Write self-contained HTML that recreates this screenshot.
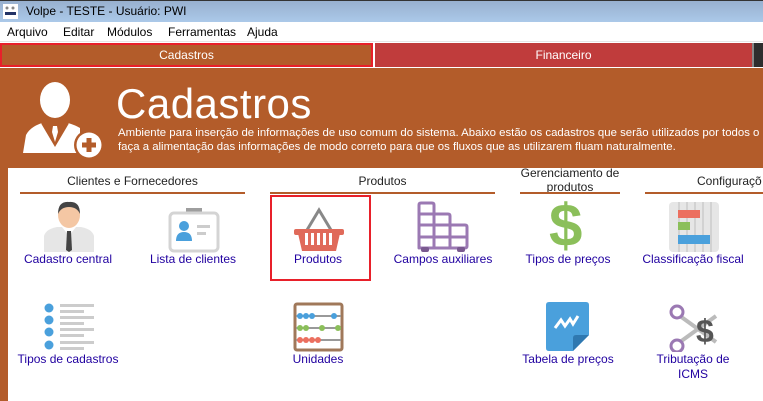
<!DOCTYPE html>
<html><head><meta charset="utf-8"><style>
*{margin:0;padding:0;box-sizing:border-box}
body{width:763px;height:401px;overflow:hidden;font-family:"Liberation Sans",sans-serif;background:#b35c2a;position:relative}
.abs{position:absolute}
.title{left:0;top:0;width:763px;height:22px;background:linear-gradient(#98b0cf,#abc9e9);border-top:1px solid #333;font-size:12px;color:#000}
.menu{left:0;top:22px;width:763px;height:20px;background:#fff;border-bottom:1px solid #e6e6e6;font-size:12px}
.menu span{position:absolute;top:3px}
.tab{top:43px;height:24px;color:#fff;font-size:12px;text-align:center;line-height:24px}
.hdr{font-size:12px;color:#222;text-align:center}
.ul{height:2px;background:#b35c2a;top:192px}
.lbl{font-size:12px;color:#2000a0;text-align:center;width:124px}
</style></head><body>
<div class="abs title">
<svg class="abs" style="left:3px;top:3px" width="15" height="15"><rect width="15" height="15" fill="#fff"/><rect x="2" y="8" width="11" height="3" fill="#236"/><circle cx="4" cy="4" r="1.5" fill="#888"/><circle cx="10" cy="4" r="1.5" fill="#888"/></svg>
<span class="abs" style="left:26px;top:3px">Volpe - TESTE - Usuário: PWI</span></div>
<div class="abs menu"><span style="left:7px">Arquivo</span><span style="left:63px">Editar</span><span style="left:107px">Módulos</span><span style="left:168px">Ferramentas</span><span style="left:247px">Ajuda</span></div>
<div class="abs" style="left:0;top:42px;width:763px;height:26px;background:#fff"></div>
<div class="abs tab" style="left:0;width:373px;background:#b35c2a;border:2px solid #e8202a;line-height:20px">Cadastros</div>
<div class="abs tab" style="left:375px;width:377px;background:#c03c3c">Financeiro</div>
<div class="abs" style="left:752px;top:43px;width:2px;height:24px;background:#888"></div>
<div class="abs" style="left:754px;top:43px;width:9px;height:24px;background:#2e2e2e"></div>
<div class="abs" style="left:0;top:68px;width:763px;height:333px;background:#b35c2a"></div>
<svg class="abs" style="left:20px;top:80px" width="85" height="80"><ellipse cx="35" cy="20" rx="15" ry="18" fill="#fff"/><path d="M3 73 L6 55 Q10 47 22 43 L35 65 L48 43 Q55 45 60 48 L60 73 Z" fill="#fff"/><path d="M33 46 L37 46 L38 52 L35 62 L32 52 Z" fill="#fff"/><path d="M22 43 L35 65 L48 43" fill="none" stroke="#b35c2a" stroke-width="2"/><circle cx="69" cy="65" r="15" fill="#b35c2a"/><circle cx="69" cy="65" r="12.5" fill="#fff"/><rect x="62" y="62.5" width="14" height="5" fill="#b35c2a"/><rect x="66.5" y="58" width="5" height="14" fill="#b35c2a"/></svg>
<div class="abs" style="left:116px;top:80px;font-size:42px;color:#fff;font-weight:normal;letter-spacing:0.5px">Cadastros</div>
<div class="abs" style="left:118px;top:126px;font-size:11.4px;color:#fff;line-height:14px;white-space:nowrap">Ambiente para inserção de informações de uso comum do sistema. Abaixo estão os cadastros que serão utilizados por todos o<br>faça a alimentação das informações de modo correto para que os fluxos que as utilizarem fluam naturalmente.</div>
<div class="abs" style="left:8px;top:168px;width:755px;height:233px;background:#fff"></div>
<div class="abs hdr" style="left:20px;top:174px;width:225px">Clientes e Fornecedores</div>
<div class="abs ul" style="left:20px;width:225px"></div>
<div class="abs hdr" style="left:270px;top:174px;width:225px">Produtos</div>
<div class="abs ul" style="left:270px;width:225px"></div>
<div class="abs hdr" style="left:505px;top:166px;width:130px;line-height:14px">Gerenciamento de<br>produtos</div>
<div class="abs ul" style="left:520px;width:100px"></div>
<div class="abs hdr" style="left:697px;top:174px;width:80px;text-align:left">Configuraçõ</div>
<div class="abs ul" style="left:645px;width:118px"></div>
<div class="abs" style="left:270px;top:195px;width:101px;height:86px;border:2px solid #e8202a"></div>
<!-- row1 icons -->
<svg class="abs" style="left:43px;top:200px" width="52" height="52"><path d="M1 52 L1 36 Q3 29 14 27 L38 27 Q49 29 51 36 L51 52Z" fill="#e6e6e6"/><path d="M19 27 L26 36 L33 27Z" fill="#fff"/><path d="M24 31 L28 31 L29 50 L26 52 L23 50Z" fill="#444"/><ellipse cx="26" cy="15" rx="11" ry="13" fill="#f4c7a4"/><path d="M15 14 Q15 1 26 2 Q37 1 37 14 Q34 7 26 7 Q18 7 15 14Z" fill="#444"/></svg>
<svg class="abs" style="left:168px;top:208px" width="52" height="48"><rect x="18" y="0" width="16" height="6" fill="#9e9e9e"/><rect x="2" y="5" width="48" height="38" rx="4" fill="none" stroke="#d4d4d4" stroke-width="3"/><circle cx="16" cy="18" r="5" fill="#4aa0dc"/><path d="M8 33 Q8 24 16 24 Q24 24 24 33Z" fill="#4aa0dc"/><rect x="29" y="17" width="13" height="3" fill="#ccc"/><rect x="29" y="24" width="9" height="3" fill="#ccc"/></svg>
<svg class="abs" style="left:293px;top:206px" width="52" height="46"><path d="M14 24 L26 4 L38 24" fill="none" stroke="#888" stroke-width="3"/><rect x="1" y="23" width="50" height="6" rx="2" fill="#e06a5a"/><path d="M4 29 L48 29 L43 51 L9 51Z" fill="#e06a5a" transform="translate(0,-6)"/><g fill="#fff"><rect x="12" y="27" width="3" height="12"/><rect x="18" y="27" width="3" height="12"/><rect x="24" y="27" width="3" height="12"/><rect x="30" y="27" width="3" height="12"/><rect x="36" y="27" width="3" height="12"/></g></svg>
<svg class="abs" style="left:417px;top:201px" width="52" height="52"><g fill="none" stroke="#9b79b3" stroke-width="3" stroke-linejoin="round"><path d="M2 47 V4 Q2 2 4 2 H15 Q17 2 17 4 V13 H31 Q33 13 33 15 V24 H48 Q50 24 50 26 V45 Q50 47 48 47 H4 Q2 47 2 45Z"/><path d="M2 13 H17 M2 24 H33 M2 36 H50 M17 13 V47 M33 24 V47"/></g><rect x="4" y="46" width="8" height="5" rx="2" fill="#7a5a90"/><rect x="40" y="46" width="8" height="5" rx="2" fill="#7a5a90"/></svg>
<div class="abs" style="left:549px;top:196px;font-size:60px;font-weight:bold;color:#8bbf5a;line-height:60px">$</div>
<svg class="abs" style="left:669px;top:202px" width="50" height="50"><rect width="50" height="50" rx="4" fill="#e6e6e6"/><g stroke="#d2d2d2" stroke-width="2"><path d="M10 0V50M18 0V50M26 0V50M34 0V50M42 0V50"/></g><rect x="9" y="8" width="22" height="8" fill="#ec6f5f"/><rect x="9" y="20" width="12" height="8" fill="#8bbf5a"/><rect x="9" y="33" width="32" height="9" fill="#4aa0dc"/></svg>
<div class="abs lbl" style="left:6px;top:252px">Cadastro central</div>
<div class="abs lbl" style="left:131px;top:252px">Lista de clientes</div>
<div class="abs lbl" style="left:256px;top:252px">Produtos</div>
<div class="abs lbl" style="left:381px;top:252px">Campos auxiliares</div>
<div class="abs lbl" style="left:506px;top:252px">Tipos de preços</div>
<div class="abs lbl" style="left:631px;top:252px">Classificação fiscal</div>
<!-- row2 icons -->
<svg class="abs" style="left:43px;top:302px" width="52" height="50"><g fill="#4aa0dc"><circle cx="6" cy="6" r="4.5"/><circle cx="6" cy="18" r="4.5"/><circle cx="6" cy="30" r="4.5"/><circle cx="6" cy="43" r="4.5"/></g><g fill="#ccc"><rect x="17" y="2" width="34" height="3"/><rect x="17" y="8" width="24" height="3"/><rect x="17" y="14" width="34" height="3"/><rect x="17" y="20" width="24" height="3"/><rect x="17" y="26" width="34" height="3"/><rect x="17" y="32" width="24" height="3"/><rect x="17" y="39" width="34" height="3"/><rect x="17" y="45" width="24" height="3"/></g></svg>
<svg class="abs" style="left:293px;top:302px" width="52" height="50"><rect x="2" y="2" width="47" height="46" rx="2" fill="none" stroke="#a0785a" stroke-width="3"/><g stroke="#999" stroke-width="2"><path d="M3 14H48M3 26H48M3 38H48"/></g><g fill="#4aa0dc"><circle cx="7" cy="14" r="3"/><circle cx="13" cy="14" r="3"/><circle cx="19" cy="14" r="3"/><circle cx="41" cy="14" r="3"/></g><g fill="#8bbf5a"><circle cx="7" cy="26" r="3"/><circle cx="13" cy="26" r="3"/><circle cx="29" cy="26" r="3"/><circle cx="45" cy="26" r="3"/></g><g fill="#ec6f5f"><circle cx="7" cy="38" r="3"/><circle cx="13" cy="38" r="3"/><circle cx="19" cy="38" r="3"/><circle cx="25" cy="38" r="3"/></g></svg>
<svg class="abs" style="left:546px;top:302px" width="45" height="50"><path d="M3 0H40Q43 0 43 3V33L27 49H3Q0 49 0 46V3Q0 0 3 0Z" fill="#4aa0dc"/><path d="M27 49L27 36Q27 33 30 33L43 33Z" fill="#2f78b0"/><path d="M9 26L15 18L19 24L24 17L27 22L32 14" fill="none" stroke="#fff" stroke-width="3"/></svg>
<svg class="abs" style="left:668px;top:302px" width="52" height="50"><path d="M12 14L48 40M12 40L48 14" stroke="#bbb" stroke-width="4"/><circle cx="9" cy="10" r="6" fill="none" stroke="#9b79b3" stroke-width="3"/><circle cx="9" cy="44" r="6" fill="none" stroke="#9b79b3" stroke-width="3"/><text x="28" y="40" font-family="Liberation Sans" font-weight="bold" font-size="32" fill="#555">$</text></svg>
<div class="abs lbl" style="left:6px;top:352px">Tipos de cadastros</div>
<div class="abs lbl" style="left:256px;top:352px">Unidades</div>
<div class="abs lbl" style="left:506px;top:352px">Tabela de preços</div>
<div class="abs lbl" style="left:631px;top:352px;line-height:15px">Tributação de<br>ICMS</div>
</body></html>
